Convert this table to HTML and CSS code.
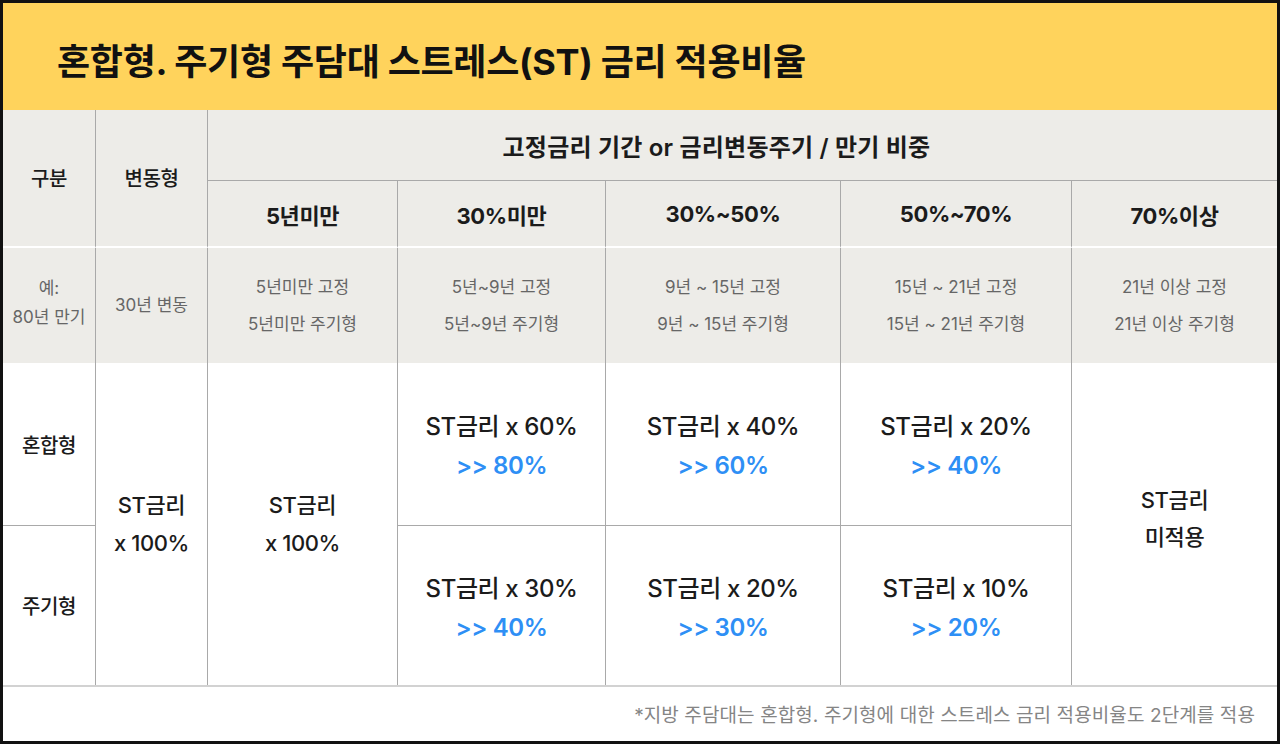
FILE: index.html
```html
<!DOCTYPE html>
<html lang="ko">
<head>
<meta charset="utf-8">
<title>혼합형. 주기형 주담대 스트레스(ST) 금리 적용비율</title>
<link rel="stylesheet" href="styles.css">
</head>
<body>
<div class="frame">
  <header class="title-bar">
    <h1 class="title">혼합형. 주기형 주담대 스트레스(ST) 금리 적용비율</h1>
  </header>
  <div class="table">
    <div class="cell head gubun">구분</div>
    <div class="cell head byeon">변동형</div>
    <div class="cell head period">고정금리 기간 or 금리변동주기 / 만기 비중</div>

    <div class="cell head sub c3">5년미만</div>
    <div class="cell head sub c4">30%미만</div>
    <div class="cell head sub c5">30%~50%</div>
    <div class="cell head sub c6">50%~70%</div>
    <div class="cell head sub c7 last">70%이상</div>

    <div class="cell ex c1"><span class="ex-tight">예:<br>80년 만기</span></div>
    <div class="cell ex c2">30년 변동</div>
    <div class="cell ex c3">5년미만 고정<br>5년미만 주기형</div>
    <div class="cell ex c4">5년~9년 고정<br>5년~9년 주기형</div>
    <div class="cell ex c5">9년 ~ 15년 고정<br>9년 ~ 15년 주기형</div>
    <div class="cell ex c6">15년 ~ 21년 고정<br>15년 ~ 21년 주기형</div>
    <div class="cell ex c7 last">21년 이상 고정<br>21년 이상 주기형</div>

    <div class="cell label r4 c1 split">혼합형</div>
    <div class="cell label r5 c1">주기형</div>
    <div class="cell full c2 span-body">ST금리<br>x 100%</div>
    <div class="cell full c3 span-body">ST금리<br>x 100%</div>

    <div class="cell rate r4 c4 split">ST금리 x 60%<span class="up">&gt;&gt; 80%</span></div>
    <div class="cell rate r4 c5 split">ST금리 x 40%<span class="up">&gt;&gt; 60%</span></div>
    <div class="cell rate r4 c6 split">ST금리 x 20%<span class="up">&gt;&gt; 40%</span></div>
    <div class="cell rate r5 c4">ST금리 x 30%<span class="up">&gt;&gt; 40%</span></div>
    <div class="cell rate r5 c5">ST금리 x 20%<span class="up">&gt;&gt; 30%</span></div>
    <div class="cell rate r5 c6">ST금리 x 10%<span class="up">&gt;&gt; 20%</span></div>

    <div class="cell full c7 last span-body none">ST금리<br>미적용</div>
  </div>
  <footer class="note">*지방 주담대는 혼합형. 주기형에 대한 스트레스 금리 적용비율도 2단계를 적용</footer>
</div>
</body>
</html>
```

FILE: styles.css
```css
* { box-sizing: border-box; }

html, body {
  margin: 0;
  padding: 0;
  background: #111;
}

body {
  font-family: Inter, "Noto Sans CJK KR", sans-serif;
  color: #1b1b1b;
}

.frame {
  width: 1280px;
  height: 744px;
  border: 3px solid #111;
  background: #fff;
  display: flex;
  flex-direction: column;
  overflow: hidden;
}

.title-bar {
  height: 107px;
  background: #ffd35c;
  display: flex;
  align-items: center;
  padding: 4px 0 0 54px;
}

.title {
  margin: 0;
  font-size: 36px;
  font-weight: 700;
  letter-spacing: -0.3px;
  color: #111;
}

.table {
  display: grid;
  grid-template-columns: 93px 112px 190px 208px 235px 231px 205px;
  grid-template-rows: 71px 67px 115px 163px 159px;
  border-bottom: 2px solid #d2d2d2;
}

.cell {
  display: flex;
  flex-direction: column;
  align-items: center;
  justify-content: center;
  text-align: center;
  border-right: 1px solid #a9a9a9;
  letter-spacing: -0.4px;
}

.cell.last { border-right: none; }

.head {
  background: #edece8;
  font-weight: 700;
  font-size: 22px;
}

.gubun {
  grid-column: 1;
  grid-row: 1 / 3;
  font-size: 20px;
  font-weight: 500;
  border-bottom: 2px solid #fff;
  padding-bottom: 2px;
}

.byeon {
  grid-column: 2;
  grid-row: 1 / 3;
  font-size: 20px;
  font-weight: 500;
  border-bottom: 2px solid #fff;
  padding-bottom: 2px;
}

.period {
  grid-column: 3 / 8;
  grid-row: 1;
  border-right: none;
  border-bottom: 1px solid #a9a9a9;
  font-weight: 600;
  font-size: 24px;
  letter-spacing: 0.2px;
  padding-right: 52px;
}

.sub {
  grid-row: 2;
  border-bottom: 2px solid #fff;
}

.c1 { grid-column: 1; }
.c2 { grid-column: 2; }
.c3 { grid-column: 3; }
.c4 { grid-column: 4; }
.c5 { grid-column: 5; }
.c6 { grid-column: 6; }
.c7 { grid-column: 7; }

.ex {
  grid-row: 3;
  background: #edece8;
  color: #666;
  font-size: 17px;
  line-height: 37px;
  font-weight: 400;
  letter-spacing: 0;
}

.ex-tight {
  line-height: 29px;
  padding-bottom: 6px;
}

.r4 { grid-row: 4; }
.r5 { grid-row: 5; }

.split { border-bottom: 1px solid #a9a9a9; }

.label {
  font-size: 20px;
  font-weight: 500;
}

.span-body {
  grid-row: 4 / 6;
}

.full {
  font-size: 22px;
  font-weight: 500;
  line-height: 38px;
}

.none {
  padding-bottom: 10px;
  line-height: 37px;
}

.rate {
  font-size: 24px;
  font-weight: 500;
  line-height: 39px;
  padding-top: 4px;
}

.up {
  color: #2e8ff5;
  font-weight: 600;
}

.note {
  flex: 1;
  display: flex;
  align-items: center;
  justify-content: flex-end;
  padding: 0 22px 2px 0;
  font-size: 19px;
  color: #858585;
  letter-spacing: 0.1px;
}
```
